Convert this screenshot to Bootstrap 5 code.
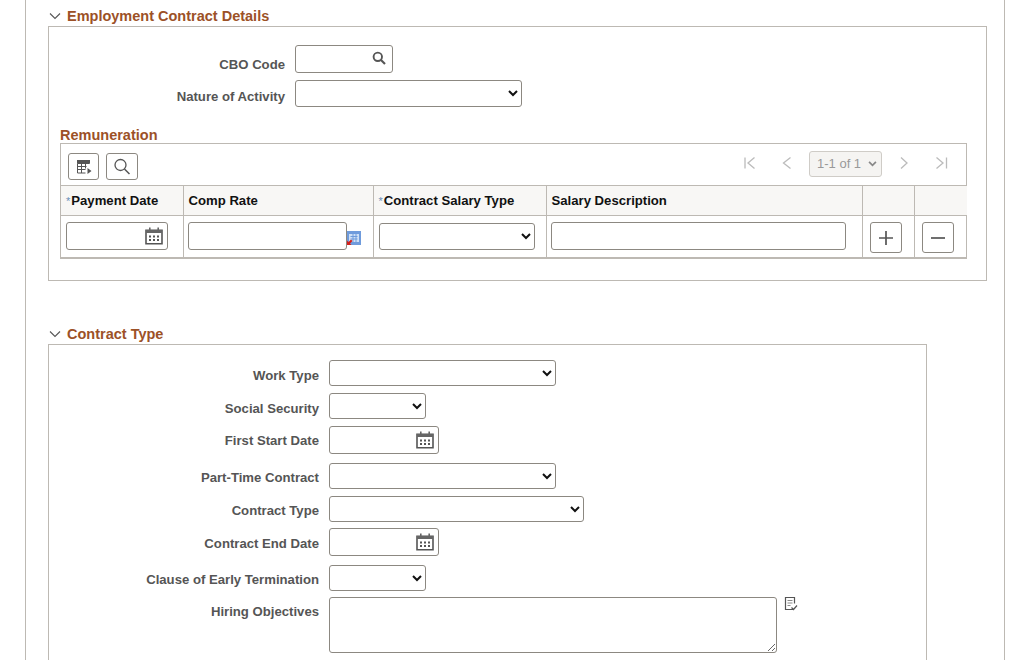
<!DOCTYPE html>
<html lang="en">
<head>
<meta charset="utf-8">
<title>Employment Contract</title>
<link rel="stylesheet" href="https://cdn.jsdelivr.net/npm/bootstrap@5.3.0/dist/css/bootstrap.min.css">
<style>
html,body{height:660px;overflow:hidden;background:#fff}
body{font-family:"Liberation Sans",Arial,sans-serif;font-size:13px;color:#515151}
.page{margin-left:25px;width:980px;height:660px;border-left:1px solid #bdb9b3;border-right:1px solid #bdb9b3;padding:8px 0 0 22px;overflow:hidden}
.sec-head{height:18px;margin:0;font-size:14.5px;font-weight:700;line-height:16px;padding-bottom:2px;color:#9c5127;gap:6px}
.sec-head svg{width:12px;height:12px;flex:none;margin-left:1px}
.box{border:1px solid #bdb9b3;background:#fff}
.box-1{width:939px;height:255px;padding-top:18px}
.box-2{width:879px;height:340px;padding-top:15px}
.sec-2{margin-top:45px}
.frow{gap:10px}
.lab{font-weight:700;color:#555;font-size:13.15px;text-align:right;margin:0;line-height:16px}
.box-1 .lab{width:236px}
.box-2 .lab{width:270px}
.pd2{padding-top:2px}.pd3{padding-top:3px}.pd4{padding-top:4px}.pd5{padding-top:5px}.pd7{padding-top:7px}
.form-control.pt,.form-select.pt{border:1px solid #8c8881;border-radius:3px;padding:0 4px;font-size:13px;box-shadow:none;background-color:#fff;min-height:0}
.form-select.pt{background-image:url("data:image/svg+xml,%3csvg xmlns='http://www.w3.org/2000/svg' viewBox='0 0 10 7'%3e%3cpath fill='none' stroke='%23111' stroke-width='2' d='M1 1l4 4 4-4'/%3e%3c/svg%3e");background-position:right 3px center;background-size:10px 7px}
.icon-field{flex:none}
.icon-field svg{position:absolute;pointer-events:none}
.w98{width:98px}.w110{width:110px}.w102{width:102px}.w97{width:97px}.w227{width:227px}.w255{width:255px}
.w159{width:159px;flex:none}.w156{width:156px}.w295{width:295px}
.h26{height:26px}.h27{height:27px}.h28{height:28px}
.r1{margin-bottom:7px}
.rem{margin:20px 0 0 11px;font-size:14.5px;font-weight:700;line-height:16px;color:#9c5127}
.grid{margin-left:11px;width:907px;border:1px solid #bdb9b3;border-bottom-width:2px}
.tbar{height:41px;padding:9px 0 0 7px;gap:7px}
.tbtn{width:31px;height:27px;padding:0;border:1px solid #8c8881;border-radius:3px;background:#fff}
.tbtn.wide{width:32px}
.tbtn svg{width:20px;height:20px;color:#555}
.pager{gap:0;margin:-2px 0 0 auto}
.pager svg{width:14px;height:14px;color:#bbb;flex:none;margin-top:-2px}
.pager .pg-first{margin-right:23px}.pager .pg-prev{margin-right:15px}.pager .pg-next{margin-left:15px;margin-right:23px}.pager .pg-last{margin-right:18px}
.form-select.pg{width:73px;height:26px;font-size:13px;color:#999;background-color:#f5f4f2;border:1px solid #cfccc7;border-radius:3px;padding:0 0 0 7px;opacity:1;background-position:right 4px center;background-size:9px 6px;background-image:url("data:image/svg+xml,%3csvg xmlns='http://www.w3.org/2000/svg' viewBox='0 0 10 7'%3e%3cpath fill='none' stroke='%23888' stroke-width='2' d='M1 1l4 4 4-4'/%3e%3c/svg%3e")}
.tg{margin:0;table-layout:fixed;width:906px;border-collapse:collapse;--bs-table-bg:transparent}
.tg th{height:30px;background:#f8f7f5;color:#111;font-size:13.15px;font-weight:700;padding:0 0 0 5px;vertical-align:middle;border:solid #bdb9b3;border-width:1px 1px 1px 0;line-height:16px;white-space:nowrap}
.tg td{height:41px;padding:6px 5px 0;vertical-align:top;border:solid #bdb9b3;border-width:0 1px 0 0}
.tg td.tight{padding-left:4px}
.tg td.down{padding-top:7px}
.tg td.acell{padding-left:7px;padding-right:0}
.tg th:last-child,.tg td:last-child{border-right:0}
.c1{width:122px}.c2{width:190px}.c3{width:173px}.c4{width:316px}.c5{width:52px}.c6{width:53px}
.req{color:#6b8fb8;font-size:11px;font-weight:400;margin-right:1px}
.abtn{width:32px;height:31px;padding:0;border:1px solid #8c8881;border-radius:3px;background:#fff}
.abtn svg{width:18px;height:18px}
.ta{width:448px;height:56px;resize:both}
.note{width:14px;height:14px;flex:none;margin:0 0 0 -3px;align-self:flex-start}
.prompt{width:14px;height:14px;flex:none;margin:9px 0 0 0}
.cal{right:4px;top:4px;width:20px;height:20px}
.mag{right:7px;top:6px;width:14px;height:14px}
.gap7{margin-bottom:7px}.gap6{margin-bottom:6px}.gap9{margin-bottom:9px}
</style>
</head>
<body>
<svg width="0" height="0" class="d-none">
<symbol id="cal" viewBox="0 0 20 20"><path fill="none" stroke="#555" stroke-width="1.6" d="M2 4.2h16v13.6H2z"/><path fill="#666" d="M2 4h16v3H2zM5 1.5h1.6v4H5zM13.4 1.5H15v4h-1.6z"/><path fill="#555" d="M5 9.5h2v2H5zM9 9.5h2v2H9zM13 9.5h2v2h-2zM5 13h2v2H5zM9 13h2v2H9zM13 13h2v2h-2z"/></symbol>
<symbol id="chev" viewBox="0 0 12 12"><path fill="none" stroke="#555" stroke-width="1.1" d="M1 3.5l5 5 5-5"/></symbol>
</svg>
<div class="page">
  <section>
    <h2 class="sec-head d-flex align-items-center"><svg><use href="#chev"/></svg><span>Employment Contract Details</span></h2>
    <div class="box box-1">
      <div class="d-flex align-items-end frow r1">
        <label class="lab">CBO Code</label>
        <div class="position-relative icon-field w98">
          <input class="form-control pt h28" type="text" aria-label="CBO Code">
          <svg class="mag" viewBox="0 0 14 14"><circle cx="5.8" cy="5.8" r="4.2" fill="none" stroke="#555" stroke-width="1.9"/><path stroke="#555" stroke-width="2.2" d="M9 9l4 4"/></svg>
        </div>
      </div>
      <div class="d-flex align-items-center frow">
        <label class="lab pd7">Nature of Activity</label>
        <select class="form-select pt w227 h27" aria-label="Nature of Activity"><option></option></select>
      </div>
      <h3 class="rem">Remuneration</h3>
      <div class="grid">
        <div class="tbar d-flex align-items-start">
          <button class="tbtn d-flex align-items-center justify-content-center" type="button" aria-label="Personalize"><svg viewBox="0 0 20 20"><path fill="none" stroke="#555" d="M3.5 3.5h12v3h-12zM3.5 6.5v9.5h8M7.5 6.5v9.5M11.5 6.5v5M3.5 9.5h9M3.5 12.5h8"/><path fill="#555" d="M3 3h13v3H3zM13.5 11l4 3-4 3z"/></svg></button>
          <button class="tbtn wide d-flex align-items-center justify-content-center" type="button" aria-label="Find"><svg viewBox="0 0 20 20"><circle cx="8.5" cy="8" r="5.5" fill="none" stroke="#555" stroke-width="1.3"/><path stroke="#555" stroke-width="1.5" d="M12.5 12l5 5"/></svg></button>
          <div class="pager d-flex align-items-center">
            <svg class="pg-first" viewBox="0 0 14 14"><path fill="none" stroke="currentColor" stroke-width="1.3" d="M2 1.5v11M11.5 1.5L5 7l6.5 5.5"/></svg>
            <svg class="pg-prev" viewBox="0 0 14 14"><path fill="none" stroke="currentColor" stroke-width="1.3" d="M10.5 1.5L3.5 7l7 5.5"/></svg>
            <select class="form-select pg" disabled aria-label="Rows"><option>1-1 of 1</option></select>
            <svg class="pg-next" viewBox="0 0 14 14"><path fill="none" stroke="currentColor" stroke-width="1.3" d="M4 1.5L10 7l-6 5.5"/></svg>
            <svg class="pg-last" viewBox="0 0 14 14"><path fill="none" stroke="currentColor" stroke-width="1.3" d="M12.5 1.5v11M2.5 1.5L9 7l-6.5 5.5"/></svg>
          </div>
        </div>
        <table class="table tg">
          <thead><tr>
            <th class="c1"><span class="req">*</span>Payment Date</th>
            <th class="c2">Comp Rate</th>
            <th class="c3"><span class="req">*</span>Contract Salary Type</th>
            <th class="c4">Salary Description</th>
            <th class="c5"></th>
            <th class="c6"></th>
          </tr></thead>
          <tbody><tr>
            <td><div class="position-relative icon-field w102"><input class="form-control pt h28" type="text" aria-label="Payment Date"><svg class="cal"><use href="#cal"/></svg></div></td>
            <td class="tight"><div class="d-flex"><input class="form-control pt h28 w159" type="text" aria-label="Comp Rate"><svg class="prompt" viewBox="0 0 14 14"><path fill="#6f9bdc" d="M0 0h14v14H0z"/><path fill="#cfe0f6" d="M2 3h10v8H2z"/><path fill="none" stroke="#6f9bdc" d="M3.5 5.5h7M3.5 8h7M6 3v8M9 3v8"/><path fill="#d4201c" d="M0 14V9.5l1.5 1.5L4 8.5 5.5 10 3 12.5 4.5 14z"/></svg></div></td>
            <td class="down"><select class="form-select pt h27 w156" aria-label="Contract Salary Type"><option></option></select></td>
            <td class="tight"><input class="form-control pt h28 w295" type="text" aria-label="Salary Description"></td>
            <td class="acell"><button class="abtn d-flex align-items-center justify-content-center" type="button" aria-label="Add row"><svg viewBox="0 0 18 18"><path stroke="#555" stroke-width="1.7" d="M9 2v14M2 9h14"/></svg></button></td>
            <td class="acell"><button class="abtn d-flex align-items-center justify-content-center" type="button" aria-label="Delete row"><svg viewBox="0 0 18 18"><path stroke="#555" stroke-width="1.7" d="M2 9h14"/></svg></button></td>
          </tr></tbody>
        </table>
      </div>
    </div>
  </section>
  <section class="sec-2">
    <h2 class="sec-head d-flex align-items-center"><svg><use href="#chev"/></svg><span>Contract Type</span></h2>
    <div class="box box-2">
      <div class="d-flex align-items-center frow gap7"><label class="lab pd5">Work Type</label><select class="form-select pt w227 h26" aria-label="Work Type"><option></option></select></div>
      <div class="d-flex align-items-center frow gap7"><label class="lab pd5">Social Security</label><select class="form-select pt w97 h26" aria-label="Social Security"><option></option></select></div>
      <div class="d-flex align-items-center frow gap9"><label class="lab pd2">First Start Date</label><div class="position-relative icon-field w110"><input class="form-control pt h28" type="text" aria-label="First Start Date"><svg class="cal"><use href="#cal"/></svg></div></div>
      <div class="d-flex align-items-center frow gap7"><label class="lab pd4">Part-Time Contract</label><select class="form-select pt w227 h26" aria-label="Part-Time Contract"><option></option></select></div>
      <div class="d-flex align-items-center frow gap6"><label class="lab pd4">Contract Type</label><select class="form-select pt w255 h26" aria-label="Contract Type"><option></option></select></div>
      <div class="d-flex align-items-center frow gap9"><label class="lab pd4">Contract End Date</label><div class="position-relative icon-field w110"><input class="form-control pt h28" type="text" aria-label="Contract End Date"><svg class="cal"><use href="#cal"/></svg></div></div>
      <div class="d-flex align-items-center frow gap6"><label class="lab pd3">Clause of Early Termination</label><select class="form-select pt w97 h26" aria-label="Clause of Early Termination"><option></option></select></div>
      <div class="d-flex align-items-start frow"><label class="lab pd7">Hiring Objectives</label><textarea class="form-control pt ta" aria-label="Hiring Objectives"></textarea>
        <svg class="note" viewBox="0 0 14 14"><path fill="none" stroke="#555" stroke-width="1.2" d="M9 12.5H1.5v-12h9v6"/><path stroke="#888" d="M3.5 3.5h5M3.5 6h5M3.5 8.5h3"/><path fill="none" stroke="#555" stroke-width="1.2" d="M7.5 10.5l2 2 3.5-4"/></svg>
      </div>
    </div>
  </section>
</div>
<script src="https://cdn.jsdelivr.net/npm/bootstrap@5.3.0/dist/js/bootstrap.bundle.min.js"></script>
</body>
</html>
